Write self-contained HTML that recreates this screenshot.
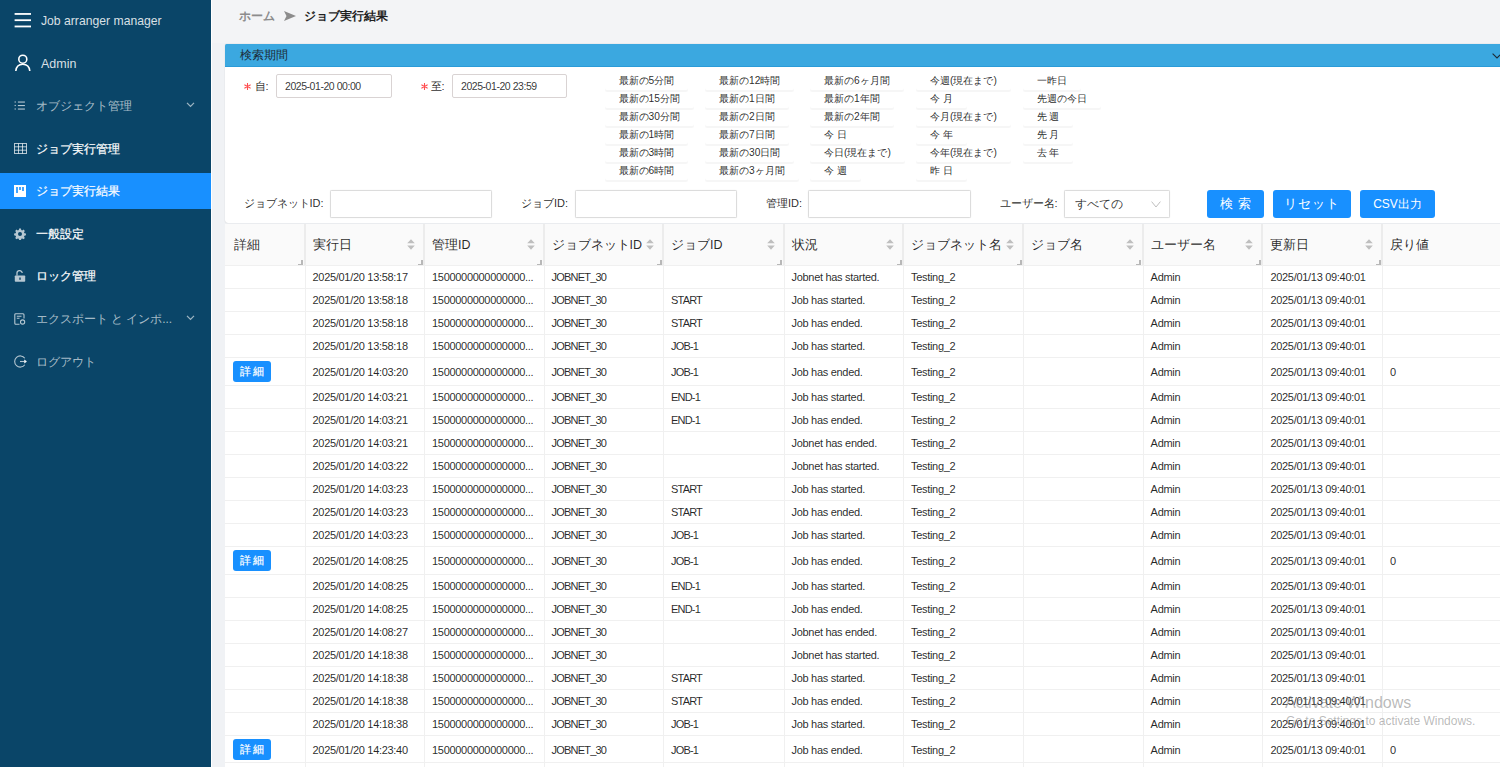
<!DOCTYPE html>
<html lang="ja"><head><meta charset="utf-8"><title>ジョブ実行結果</title>
<style>
*{box-sizing:border-box;margin:0;padding:0}
html,body{width:1500px;height:767px;overflow:hidden}
body{font-family:"Liberation Sans",sans-serif;background:#f0f2f5;position:relative;color:rgba(0,0,0,.85)}
.abs{position:absolute;white-space:nowrap}
#side{position:absolute;left:0;top:0;width:211px;height:767px;background:#0a4568}
#sideline{position:absolute;left:211px;top:0;width:1px;height:767px;background:#fff}
#topbar{position:absolute;left:212px;top:0;width:1288px;height:43px;background:#f3f4f6}
.mi{position:absolute;left:0;width:211px;height:36px;color:rgba(255,255,255,.65);font-size:12px;line-height:36px}
.mi .t{position:absolute;left:35.5px;top:0}
.mi.w{color:#fff;-webkit-text-stroke:0.2px #fff}
.mi.sel{background:#1890ff;color:#fff;-webkit-text-stroke:0.2px #fff}
.mi svg{position:absolute}
.chev{position:absolute;left:185.8px;top:14px}
#panel{position:absolute;left:225px;top:44px;width:1290px;height:179px;background:#fff;border-radius:1.5px 1.5px 3px 3px;box-shadow:0 0 1px rgba(0,0,0,.25)}
#phead{position:absolute;left:0;top:0;width:100%;height:23px;background:#3ba8e0;border-radius:1.5px 1.5px 0 0;border-bottom:1px solid #2a9bd8}
#phead .t{position:absolute;left:15px;top:0;line-height:22px;font-size:12px;color:#1d2b36}
.lbl{font-size:11px;color:rgba(0,0,0,.85);line-height:14px}
.req{color:#f5222d;font-family:"Liberation Mono",monospace}
.inp{position:absolute;background:#fff;border:1px solid #d9d3d3;border-radius:2px;font-size:10.5px;letter-spacing:-0.45px;color:rgba(0,0,0,.8);padding-left:8px}
.inp.f{border-color:#dcdcdc;border-radius:1.5px;box-shadow:0 0 1px rgba(0,0,0,.12)}
.ql{position:absolute;font-size:10.2px;height:18px;line-height:18px;padding:0 14px;color:rgba(0,0,0,.85);border-radius:2px;box-shadow:0 2px 0 rgba(0,0,0,.035)}
.qlb{position:absolute;height:1px;background:#f5f5f5}
.btn{position:absolute;background:#1890ff;color:#fff;border-radius:3px;font-size:12.5px;text-align:center}
#tbl{position:absolute;left:225px;top:224px;width:1275px;height:543px;background:#fff}
.th{position:absolute;font-size:12.5px;color:rgba(0,0,0,.85);line-height:16px}
.td{position:absolute;font-size:11px;letter-spacing:-0.3px;color:rgba(0,0,0,.85);line-height:14px}
.hl{position:absolute;height:1px;background:#f0f0f0}
.vl{position:absolute;width:1px;background:#f0f0f0}
.sort{position:absolute;width:8px;height:11px}
.rh{position:absolute;width:5px;height:5px;border-right:2px solid #b8b8b8;border-bottom:1.5px solid #b8b8b8}
.dbtn{position:absolute;left:233px;width:38px;height:21px;background:#1890ff;border-radius:3px;color:#fff;font-size:10.5px;line-height:21px;text-align:center;-webkit-text-stroke:0.2px #fff}
</style></head><body>

<div id="side">
<svg class="abs" style="left:14px;top:12px" width="18" height="16" viewBox="0 0 18 16"><rect x="0.6" y="1.05" width="16.4" height="1.8" fill="#fff"/><rect x="0.6" y="7.3" width="16.4" height="1.8" fill="#fff"/><rect x="0.6" y="13.56" width="16.4" height="1.8" fill="#fff"/></svg>
<div class="abs" style="left:41px;top:13px;font-size:12.2px;line-height:16px;color:rgba(255,255,255,.85)">Job arranger manager</div>
<svg class="abs" style="left:14px;top:54px" width="18" height="18" viewBox="0 0 18 18"><circle cx="8.8" cy="5.2" r="4" fill="none" stroke="#fff" stroke-width="1.6"/><path d="M1.8 17 C2.2 12.3 5 10.2 8.8 10.2 C12.6 10.2 15.4 12.3 15.8 17" fill="none" stroke="#fff" stroke-width="1.6"/></svg>
<div class="abs" style="left:41px;top:56px;font-size:12.5px;line-height:16px;color:rgba(255,255,255,.85)">Admin</div>
<div class="mi " style="top:87.5px">
<svg class="abs" style="left:14px;top:13.5px" width="12" height="10" viewBox="0 0 12 10"><g fill="rgba(255,255,255,.7)"><rect x="0.6" y="0.4" width="1.2" height="1.2"/><rect x="0.6" y="3.9" width="1.2" height="1.2"/><rect x="0.6" y="7.4" width="1.2" height="1.2"/><rect x="3.9" y="0.5" width="7" height="1.1"/><rect x="3.9" y="4" width="7" height="1.1"/><rect x="3.9" y="7.5" width="7" height="1.1"/></g></svg>
<span class="t">オブジェクト管理</span>
<svg class="chev" width="9" height="6" viewBox="0 0 9 6"><path d="M1 0.9 L4.5 4.4 L8 0.9" fill="none" stroke="rgba(255,255,255,.6)" stroke-width="1.3"/></svg>
</div>
<div class="mi w" style="top:130.5px">
<svg class="abs" style="left:13.5px;top:12.5px" width="13" height="11" viewBox="0 0 13 11"><g fill="none" stroke="rgba(255,255,255,.7)" stroke-width="1"><rect x="0.5" y="0.5" width="12" height="10"/><path d="M0.5 3.8H12.5M0.5 7.2H12.5M4.5 0.5V10.5M8.5 0.5V10.5"/></g></svg>
<span class="t">ジョブ実行管理</span>
</div>
<div class="mi sel" style="top:173px">
<svg class="abs" style="left:14px;top:12px" width="12" height="12" viewBox="0 0 12 12"><rect x="0" y="0" width="12" height="12" fill="#fff"/><rect x="2.2" y="2" width="1.6" height="6" fill="#1890ff"/><rect x="5.2" y="2" width="1.6" height="3" fill="#1890ff"/><rect x="8.2" y="2" width="1.6" height="4" fill="#1890ff"/></svg>
<span class="t">ジョブ実行結果</span>
</div>
<div class="mi w" style="top:215.5px">
<svg class="abs" style="left:14px;top:12.5px" width="12" height="12" viewBox="0 0 24 24"><path fill="rgba(255,255,255,.7)" d="M13.9 1l.6 3 2 .9 2.6-1.7 2.6 2.6-1.7 2.6.9 2 3 .6v3.7l-3 .6-.9 2 1.7 2.6-2.6 2.6-2.6-1.7-2 .9-.6 3h-3.7l-.6-3-2-.9-2.6 1.7-2.6-2.6 1.7-2.6-.9-2-3-.6v-3.7l3-.6.9-2-1.7-2.6 2.6-2.6 2.6 1.7 2-.9.6-3zM12 8a4 4 0 100 8 4 4 0 000-8z"/></svg>
<span class="t">一般設定</span>
</div>
<div class="mi w" style="top:258px">
<svg class="abs" style="left:14px;top:12px" width="12" height="12" viewBox="0 0 12 12"><path d="M3 5.5V3.5A2.6 2.6 0 0 1 8.2 3" fill="none" stroke="rgba(255,255,255,.7)" stroke-width="1.3"/><rect x="0.8" y="5.5" width="10.4" height="6.2" rx="0.8" fill="rgba(255,255,255,.7)"/><rect x="5.3" y="7.5" width="1.4" height="2.3" fill="#0b4468"/></svg>
<span class="t">ロック管理</span>
</div>
<div class="mi " style="top:301px">
<svg class="abs" style="left:14px;top:12px" width="12" height="12" viewBox="0 0 12 12"><g fill="none" stroke="rgba(255,255,255,.7)" stroke-width="1.1"><path d="M5.5 11.3H1.8A1 1 0 0 1 0.8 10.3V1.7A1 1 0 0 1 1.8 0.7H9A1 1 0 0 1 10 1.7V5.5"/><path d="M2.8 3.2H7.5M2.8 5.2H5.5"/><circle cx="8.6" cy="9" r="2.1"/></g></svg>
<span class="t">エクスポート と インポ...</span>
<svg class="chev" width="9" height="6" viewBox="0 0 9 6"><path d="M1 0.9 L4.5 4.4 L8 0.9" fill="none" stroke="rgba(255,255,255,.6)" stroke-width="1.3"/></svg>
</div>
<div class="mi " style="top:343.5px">
<svg class="abs" style="left:13.5px;top:11.5px" width="13" height="13" viewBox="0 0 13 13"><g fill="none" stroke="rgba(255,255,255,.7)" stroke-width="1.1"><path d="M10.8 3.2A5.6 5.6 0 1 0 10.8 9.8"/><path d="M6 6.5H12.2"/><path d="M10.3 4.8L12.2 6.5 10.3 8.2" fill="rgba(255,255,255,.7)"/></g></svg>
<span class="t">ログアウト</span>
</div>
</div><div id="sideline"></div>
<div id="topbar"></div>
<div class="abs" style="left:239px;top:9px;font-size:12.3px;line-height:15px;font-weight:bold;color:#8c8c8c">ホーム</div>
<svg class="abs" style="left:284px;top:11px" width="12" height="10" viewBox="0 0 12 10"><path d="M0 0 L12 5 L0 10 L2.5 5Z" fill="#8c8c8c"/></svg>
<div class="abs" style="left:303.5px;top:9px;font-size:12.3px;line-height:15px;font-weight:bold;color:#1f1f1f">ジョブ実行結果</div>
<div id="panel"><div id="phead"><span class="t">検索期間</span>
<svg class="abs" style="left:1267px;top:9px" width="10" height="6" viewBox="0 0 10 6"><path d="M0.6 0.6 L5 5 L9.4 0.6" fill="none" stroke="#1d2b36" stroke-width="1.1"/></svg>
</div></div>
<svg class="abs" style="left:243.5px;top:82.8px" width="7" height="7" viewBox="0 0 7 7"><g stroke="#ff4d4f" stroke-width="1.1" stroke-linecap="round"><path d="M3.5 0.4V6.6M0.8 1.95L6.2 5.05M0.8 5.05L6.2 1.95"/></g></svg>
<div class="abs lbl" style="left:254.5px;top:79px">自:</div>
<div class="inp" style="left:276px;top:74px;width:116px;height:24px;line-height:22px">2025-01-20 00:00</div>
<svg class="abs" style="left:420.5px;top:82.8px" width="7" height="7" viewBox="0 0 7 7"><g stroke="#ff4d4f" stroke-width="1.1" stroke-linecap="round"><path d="M3.5 0.4V6.6M0.8 1.95L6.2 5.05M0.8 5.05L6.2 1.95"/></g></svg>
<div class="abs lbl" style="left:430.5px;top:79px">至:</div>
<div class="inp" style="left:452px;top:74px;width:115px;height:24px;line-height:22px">2025-01-20 23:59</div>
<div class="ql" style="left:604.5px;top:72.0px">最新の5分間</div>
<div class="ql" style="left:604.5px;top:89.9px">最新の15分間</div>
<div class="ql" style="left:604.5px;top:107.8px">最新の30分間</div>
<div class="ql" style="left:604.5px;top:125.7px">最新の1時間</div>
<div class="ql" style="left:604.5px;top:143.6px">最新の3時間</div>
<div class="ql" style="left:604.5px;top:161.5px">最新の6時間</div>
<div class="ql" style="left:705px;top:72.0px">最新の12時間</div>
<div class="ql" style="left:705px;top:89.9px">最新の1日間</div>
<div class="ql" style="left:705px;top:107.8px">最新の2日間</div>
<div class="ql" style="left:705px;top:125.7px">最新の7日間</div>
<div class="ql" style="left:705px;top:143.6px">最新の30日間</div>
<div class="ql" style="left:705px;top:161.5px">最新の3ヶ月間</div>
<div class="ql" style="left:810px;top:72.0px">最新の6ヶ月間</div>
<div class="ql" style="left:810px;top:89.9px">最新の1年間</div>
<div class="ql" style="left:810px;top:107.8px">最新の2年間</div>
<div class="ql" style="left:810px;top:125.7px">今 日</div>
<div class="ql" style="left:810px;top:143.6px">今日(現在まで)</div>
<div class="ql" style="left:810px;top:161.5px">今 週</div>
<div class="ql" style="left:916px;top:72.0px">今週(現在まで)</div>
<div class="ql" style="left:916px;top:89.9px">今 月</div>
<div class="ql" style="left:916px;top:107.8px">今月(現在まで)</div>
<div class="ql" style="left:916px;top:125.7px">今 年</div>
<div class="ql" style="left:916px;top:143.6px">今年(現在まで)</div>
<div class="ql" style="left:916px;top:161.5px">昨 日</div>
<div class="ql" style="left:1022.5px;top:72.0px">一昨日</div>
<div class="ql" style="left:1022.5px;top:89.9px">先週の今日</div>
<div class="ql" style="left:1022.5px;top:107.8px">先 週</div>
<div class="ql" style="left:1022.5px;top:125.7px">先 月</div>
<div class="ql" style="left:1022.5px;top:143.6px">去 年</div>
<div class="abs lbl" style="left:243.5px;top:196px">ジョブネットID:</div>
<div class="inp f" style="left:330px;top:190px;width:162px;height:28px"></div>
<div class="abs lbl" style="left:521px;top:196px">ジョブID:</div>
<div class="inp f" style="left:575px;top:190px;width:162px;height:28px"></div>
<div class="abs lbl" style="left:766px;top:196px">管理ID:</div>
<div class="inp f" style="left:808px;top:190px;width:163px;height:28px"></div>
<div class="abs lbl" style="left:999.5px;top:196px">ユーザー名:</div>
<div class="inp f" style="left:1064px;top:190px;width:106px;height:28px;font-size:12.2px;letter-spacing:0;line-height:27px;padding-left:10px">すべての</div>
<svg class="abs" style="left:1150.5px;top:200.5px" width="10" height="7" viewBox="0 0 10 7"><path d="M0.6 0.6 L5 6 L9.4 0.6" fill="none" stroke="#bfbfbf" stroke-width="1"/></svg>
<div class="btn" style="left:1207px;top:190px;width:57px;height:28px;line-height:28px;letter-spacing:1px;padding-left:1px">検 索</div>
<div class="btn" style="left:1273px;top:190px;width:78px;height:28px;line-height:28px;letter-spacing:1px">リセット</div>
<div class="btn" style="left:1360px;top:190px;width:75px;height:28px;line-height:28px;font-size:12px">CSV出力</div>
<div id="tbl"></div>
<div class="abs" style="left:225px;top:224px;width:1275px;height:41px;background:#fafafa"></div>
<div class="hl" style="left:225px;top:265px;width:1275px"></div>
<div class="th" style="left:233.5px;top:237px">詳細</div>
<div class="abs" style="left:303.5px;top:224px;width:2px;height:41px;background:#ececec"></div>
<div class="rh" style="left:298.0px;top:259.7px"></div>
<div class="th" style="left:312.5px;top:237px">実行日</div>
<div class="abs" style="left:423.0px;top:224px;width:2px;height:41px;background:#ececec"></div>
<div class="rh" style="left:417.5px;top:259.7px"></div>
<svg class="sort" style="left:407.0px;top:239px" viewBox="0 0 8 11"><path d="M4 0.3L7.8 4.3H0.2Z M4 10.7L7.8 6.6H0.2Z" fill="#bfbfbf"/></svg>
<div class="th" style="left:432.0px;top:237px">管理ID</div>
<div class="abs" style="left:542.6px;top:224px;width:2px;height:41px;background:#ececec"></div>
<div class="rh" style="left:537.1px;top:259.7px"></div>
<svg class="sort" style="left:526.6px;top:239px" viewBox="0 0 8 11"><path d="M4 0.3L7.8 4.3H0.2Z M4 10.7L7.8 6.6H0.2Z" fill="#bfbfbf"/></svg>
<div class="th" style="left:551.6px;top:237px">ジョブネットID</div>
<div class="abs" style="left:662.0px;top:224px;width:2px;height:41px;background:#ececec"></div>
<div class="rh" style="left:656.5px;top:259.7px"></div>
<svg class="sort" style="left:646.0px;top:239px" viewBox="0 0 8 11"><path d="M4 0.3L7.8 4.3H0.2Z M4 10.7L7.8 6.6H0.2Z" fill="#bfbfbf"/></svg>
<div class="th" style="left:671.0px;top:237px">ジョブID</div>
<div class="abs" style="left:782.5px;top:224px;width:2px;height:41px;background:#ececec"></div>
<div class="rh" style="left:777.0px;top:259.7px"></div>
<svg class="sort" style="left:766.5px;top:239px" viewBox="0 0 8 11"><path d="M4 0.3L7.8 4.3H0.2Z M4 10.7L7.8 6.6H0.2Z" fill="#bfbfbf"/></svg>
<div class="th" style="left:791.5px;top:237px">状況</div>
<div class="abs" style="left:902.0px;top:224px;width:2px;height:41px;background:#ececec"></div>
<div class="rh" style="left:896.5px;top:259.7px"></div>
<svg class="sort" style="left:886.0px;top:239px" viewBox="0 0 8 11"><path d="M4 0.3L7.8 4.3H0.2Z M4 10.7L7.8 6.6H0.2Z" fill="#bfbfbf"/></svg>
<div class="th" style="left:911.0px;top:237px">ジョブネット名</div>
<div class="abs" style="left:1022.0px;top:224px;width:2px;height:41px;background:#ececec"></div>
<div class="rh" style="left:1016.5px;top:259.7px"></div>
<svg class="sort" style="left:1006.0px;top:239px" viewBox="0 0 8 11"><path d="M4 0.3L7.8 4.3H0.2Z M4 10.7L7.8 6.6H0.2Z" fill="#bfbfbf"/></svg>
<div class="th" style="left:1031.0px;top:237px">ジョブ名</div>
<div class="abs" style="left:1141.6px;top:224px;width:2px;height:41px;background:#ececec"></div>
<div class="rh" style="left:1136.1px;top:259.7px"></div>
<svg class="sort" style="left:1125.6px;top:239px" viewBox="0 0 8 11"><path d="M4 0.3L7.8 4.3H0.2Z M4 10.7L7.8 6.6H0.2Z" fill="#bfbfbf"/></svg>
<div class="th" style="left:1150.6px;top:237px">ユーザー名</div>
<div class="abs" style="left:1261.4px;top:224px;width:2px;height:41px;background:#ececec"></div>
<div class="rh" style="left:1255.9px;top:259.7px"></div>
<svg class="sort" style="left:1245.4px;top:239px" viewBox="0 0 8 11"><path d="M4 0.3L7.8 4.3H0.2Z M4 10.7L7.8 6.6H0.2Z" fill="#bfbfbf"/></svg>
<div class="th" style="left:1270.4px;top:237px">更新日</div>
<div class="abs" style="left:1381.0px;top:224px;width:2px;height:41px;background:#ececec"></div>
<div class="rh" style="left:1375.5px;top:259.7px"></div>
<svg class="sort" style="left:1365.0px;top:239px" viewBox="0 0 8 11"><path d="M4 0.3L7.8 4.3H0.2Z M4 10.7L7.8 6.6H0.2Z" fill="#bfbfbf"/></svg>
<div class="th" style="left:1390.0px;top:237px">戻り値</div>
<div class="td" style="left:312.5px;top:270.1px">2025/01/20 13:58:17</div>
<div class="td" style="left:432.0px;top:270.1px">1500000000000000...</div>
<div class="td" style="left:551.6px;top:270.1px;letter-spacing:-0.8px">JOBNET_30</div>
<div class="td" style="left:791.5px;top:270.1px">Jobnet has started.</div>
<div class="td" style="left:911.0px;top:270.1px">Testing_2</div>
<div class="td" style="left:1150.6px;top:270.1px">Admin</div>
<div class="td" style="left:1270.4px;top:270.1px">2025/01/13 09:40:01</div>
<div class="hl" style="left:225px;top:288.1px;width:1275px"></div>
<div class="td" style="left:312.5px;top:293.2px">2025/01/20 13:58:18</div>
<div class="td" style="left:432.0px;top:293.2px">1500000000000000...</div>
<div class="td" style="left:551.6px;top:293.2px;letter-spacing:-0.8px">JOBNET_30</div>
<div class="td" style="left:671.0px;top:293.2px;letter-spacing:-0.8px">START</div>
<div class="td" style="left:791.5px;top:293.2px">Job has started.</div>
<div class="td" style="left:911.0px;top:293.2px">Testing_2</div>
<div class="td" style="left:1150.6px;top:293.2px">Admin</div>
<div class="td" style="left:1270.4px;top:293.2px">2025/01/13 09:40:01</div>
<div class="hl" style="left:225px;top:311.2px;width:1275px"></div>
<div class="td" style="left:312.5px;top:316.3px">2025/01/20 13:58:18</div>
<div class="td" style="left:432.0px;top:316.3px">1500000000000000...</div>
<div class="td" style="left:551.6px;top:316.3px;letter-spacing:-0.8px">JOBNET_30</div>
<div class="td" style="left:671.0px;top:316.3px;letter-spacing:-0.8px">START</div>
<div class="td" style="left:791.5px;top:316.3px">Job has ended.</div>
<div class="td" style="left:911.0px;top:316.3px">Testing_2</div>
<div class="td" style="left:1150.6px;top:316.3px">Admin</div>
<div class="td" style="left:1270.4px;top:316.3px">2025/01/13 09:40:01</div>
<div class="hl" style="left:225px;top:334.3px;width:1275px"></div>
<div class="td" style="left:312.5px;top:339.4px">2025/01/20 13:58:18</div>
<div class="td" style="left:432.0px;top:339.4px">1500000000000000...</div>
<div class="td" style="left:551.6px;top:339.4px;letter-spacing:-0.8px">JOBNET_30</div>
<div class="td" style="left:671.0px;top:339.4px;letter-spacing:-0.8px">JOB-1</div>
<div class="td" style="left:791.5px;top:339.4px">Job has started.</div>
<div class="td" style="left:911.0px;top:339.4px">Testing_2</div>
<div class="td" style="left:1150.6px;top:339.4px">Admin</div>
<div class="td" style="left:1270.4px;top:339.4px">2025/01/13 09:40:01</div>
<div class="hl" style="left:225px;top:357.4px;width:1275px"></div>
<div class="dbtn" style="top:361.0px">詳 細</div>
<div class="td" style="left:312.5px;top:365.2px">2025/01/20 14:03:20</div>
<div class="td" style="left:432.0px;top:365.2px">1500000000000000...</div>
<div class="td" style="left:551.6px;top:365.2px;letter-spacing:-0.8px">JOBNET_30</div>
<div class="td" style="left:671.0px;top:365.2px;letter-spacing:-0.8px">JOB-1</div>
<div class="td" style="left:791.5px;top:365.2px">Job has ended.</div>
<div class="td" style="left:911.0px;top:365.2px">Testing_2</div>
<div class="td" style="left:1150.6px;top:365.2px">Admin</div>
<div class="td" style="left:1270.4px;top:365.2px">2025/01/13 09:40:01</div>
<div class="td" style="left:1390.0px;top:365.2px">0</div>
<div class="hl" style="left:225px;top:384.6px;width:1275px"></div>
<div class="td" style="left:312.5px;top:389.7px">2025/01/20 14:03:21</div>
<div class="td" style="left:432.0px;top:389.7px">1500000000000000...</div>
<div class="td" style="left:551.6px;top:389.7px;letter-spacing:-0.8px">JOBNET_30</div>
<div class="td" style="left:671.0px;top:389.7px;letter-spacing:-0.8px">END-1</div>
<div class="td" style="left:791.5px;top:389.7px">Job has started.</div>
<div class="td" style="left:911.0px;top:389.7px">Testing_2</div>
<div class="td" style="left:1150.6px;top:389.7px">Admin</div>
<div class="td" style="left:1270.4px;top:389.7px">2025/01/13 09:40:01</div>
<div class="hl" style="left:225px;top:407.7px;width:1275px"></div>
<div class="td" style="left:312.5px;top:412.8px">2025/01/20 14:03:21</div>
<div class="td" style="left:432.0px;top:412.8px">1500000000000000...</div>
<div class="td" style="left:551.6px;top:412.8px;letter-spacing:-0.8px">JOBNET_30</div>
<div class="td" style="left:671.0px;top:412.8px;letter-spacing:-0.8px">END-1</div>
<div class="td" style="left:791.5px;top:412.8px">Job has ended.</div>
<div class="td" style="left:911.0px;top:412.8px">Testing_2</div>
<div class="td" style="left:1150.6px;top:412.8px">Admin</div>
<div class="td" style="left:1270.4px;top:412.8px">2025/01/13 09:40:01</div>
<div class="hl" style="left:225px;top:430.8px;width:1275px"></div>
<div class="td" style="left:312.5px;top:435.9px">2025/01/20 14:03:21</div>
<div class="td" style="left:432.0px;top:435.9px">1500000000000000...</div>
<div class="td" style="left:551.6px;top:435.9px;letter-spacing:-0.8px">JOBNET_30</div>
<div class="td" style="left:791.5px;top:435.9px">Jobnet has ended.</div>
<div class="td" style="left:911.0px;top:435.9px">Testing_2</div>
<div class="td" style="left:1150.6px;top:435.9px">Admin</div>
<div class="td" style="left:1270.4px;top:435.9px">2025/01/13 09:40:01</div>
<div class="hl" style="left:225px;top:453.9px;width:1275px"></div>
<div class="td" style="left:312.5px;top:459.0px">2025/01/20 14:03:22</div>
<div class="td" style="left:432.0px;top:459.0px">1500000000000000...</div>
<div class="td" style="left:551.6px;top:459.0px;letter-spacing:-0.8px">JOBNET_30</div>
<div class="td" style="left:791.5px;top:459.0px">Jobnet has started.</div>
<div class="td" style="left:911.0px;top:459.0px">Testing_2</div>
<div class="td" style="left:1150.6px;top:459.0px">Admin</div>
<div class="td" style="left:1270.4px;top:459.0px">2025/01/13 09:40:01</div>
<div class="hl" style="left:225px;top:477.0px;width:1275px"></div>
<div class="td" style="left:312.5px;top:482.1px">2025/01/20 14:03:23</div>
<div class="td" style="left:432.0px;top:482.1px">1500000000000000...</div>
<div class="td" style="left:551.6px;top:482.1px;letter-spacing:-0.8px">JOBNET_30</div>
<div class="td" style="left:671.0px;top:482.1px;letter-spacing:-0.8px">START</div>
<div class="td" style="left:791.5px;top:482.1px">Job has started.</div>
<div class="td" style="left:911.0px;top:482.1px">Testing_2</div>
<div class="td" style="left:1150.6px;top:482.1px">Admin</div>
<div class="td" style="left:1270.4px;top:482.1px">2025/01/13 09:40:01</div>
<div class="hl" style="left:225px;top:500.1px;width:1275px"></div>
<div class="td" style="left:312.5px;top:505.2px">2025/01/20 14:03:23</div>
<div class="td" style="left:432.0px;top:505.2px">1500000000000000...</div>
<div class="td" style="left:551.6px;top:505.2px;letter-spacing:-0.8px">JOBNET_30</div>
<div class="td" style="left:671.0px;top:505.2px;letter-spacing:-0.8px">START</div>
<div class="td" style="left:791.5px;top:505.2px">Job has ended.</div>
<div class="td" style="left:911.0px;top:505.2px">Testing_2</div>
<div class="td" style="left:1150.6px;top:505.2px">Admin</div>
<div class="td" style="left:1270.4px;top:505.2px">2025/01/13 09:40:01</div>
<div class="hl" style="left:225px;top:523.2px;width:1275px"></div>
<div class="td" style="left:312.5px;top:528.3px">2025/01/20 14:03:23</div>
<div class="td" style="left:432.0px;top:528.3px">1500000000000000...</div>
<div class="td" style="left:551.6px;top:528.3px;letter-spacing:-0.8px">JOBNET_30</div>
<div class="td" style="left:671.0px;top:528.3px;letter-spacing:-0.8px">JOB-1</div>
<div class="td" style="left:791.5px;top:528.3px">Job has started.</div>
<div class="td" style="left:911.0px;top:528.3px">Testing_2</div>
<div class="td" style="left:1150.6px;top:528.3px">Admin</div>
<div class="td" style="left:1270.4px;top:528.3px">2025/01/13 09:40:01</div>
<div class="hl" style="left:225px;top:546.3px;width:1275px"></div>
<div class="dbtn" style="top:549.9px">詳 細</div>
<div class="td" style="left:312.5px;top:554.1px">2025/01/20 14:08:25</div>
<div class="td" style="left:432.0px;top:554.1px">1500000000000000...</div>
<div class="td" style="left:551.6px;top:554.1px;letter-spacing:-0.8px">JOBNET_30</div>
<div class="td" style="left:671.0px;top:554.1px;letter-spacing:-0.8px">JOB-1</div>
<div class="td" style="left:791.5px;top:554.1px">Job has ended.</div>
<div class="td" style="left:911.0px;top:554.1px">Testing_2</div>
<div class="td" style="left:1150.6px;top:554.1px">Admin</div>
<div class="td" style="left:1270.4px;top:554.1px">2025/01/13 09:40:01</div>
<div class="td" style="left:1390.0px;top:554.1px">0</div>
<div class="hl" style="left:225px;top:573.5px;width:1275px"></div>
<div class="td" style="left:312.5px;top:578.6px">2025/01/20 14:08:25</div>
<div class="td" style="left:432.0px;top:578.6px">1500000000000000...</div>
<div class="td" style="left:551.6px;top:578.6px;letter-spacing:-0.8px">JOBNET_30</div>
<div class="td" style="left:671.0px;top:578.6px;letter-spacing:-0.8px">END-1</div>
<div class="td" style="left:791.5px;top:578.6px">Job has started.</div>
<div class="td" style="left:911.0px;top:578.6px">Testing_2</div>
<div class="td" style="left:1150.6px;top:578.6px">Admin</div>
<div class="td" style="left:1270.4px;top:578.6px">2025/01/13 09:40:01</div>
<div class="hl" style="left:225px;top:596.6px;width:1275px"></div>
<div class="td" style="left:312.5px;top:601.7px">2025/01/20 14:08:25</div>
<div class="td" style="left:432.0px;top:601.7px">1500000000000000...</div>
<div class="td" style="left:551.6px;top:601.7px;letter-spacing:-0.8px">JOBNET_30</div>
<div class="td" style="left:671.0px;top:601.7px;letter-spacing:-0.8px">END-1</div>
<div class="td" style="left:791.5px;top:601.7px">Job has ended.</div>
<div class="td" style="left:911.0px;top:601.7px">Testing_2</div>
<div class="td" style="left:1150.6px;top:601.7px">Admin</div>
<div class="td" style="left:1270.4px;top:601.7px">2025/01/13 09:40:01</div>
<div class="hl" style="left:225px;top:619.7px;width:1275px"></div>
<div class="td" style="left:312.5px;top:624.8px">2025/01/20 14:08:27</div>
<div class="td" style="left:432.0px;top:624.8px">1500000000000000...</div>
<div class="td" style="left:551.6px;top:624.8px;letter-spacing:-0.8px">JOBNET_30</div>
<div class="td" style="left:791.5px;top:624.8px">Jobnet has ended.</div>
<div class="td" style="left:911.0px;top:624.8px">Testing_2</div>
<div class="td" style="left:1150.6px;top:624.8px">Admin</div>
<div class="td" style="left:1270.4px;top:624.8px">2025/01/13 09:40:01</div>
<div class="hl" style="left:225px;top:642.8px;width:1275px"></div>
<div class="td" style="left:312.5px;top:647.9px">2025/01/20 14:18:38</div>
<div class="td" style="left:432.0px;top:647.9px">1500000000000000...</div>
<div class="td" style="left:551.6px;top:647.9px;letter-spacing:-0.8px">JOBNET_30</div>
<div class="td" style="left:791.5px;top:647.9px">Jobnet has started.</div>
<div class="td" style="left:911.0px;top:647.9px">Testing_2</div>
<div class="td" style="left:1150.6px;top:647.9px">Admin</div>
<div class="td" style="left:1270.4px;top:647.9px">2025/01/13 09:40:01</div>
<div class="hl" style="left:225px;top:665.9px;width:1275px"></div>
<div class="td" style="left:312.5px;top:671.0px">2025/01/20 14:18:38</div>
<div class="td" style="left:432.0px;top:671.0px">1500000000000000...</div>
<div class="td" style="left:551.6px;top:671.0px;letter-spacing:-0.8px">JOBNET_30</div>
<div class="td" style="left:671.0px;top:671.0px;letter-spacing:-0.8px">START</div>
<div class="td" style="left:791.5px;top:671.0px">Job has started.</div>
<div class="td" style="left:911.0px;top:671.0px">Testing_2</div>
<div class="td" style="left:1150.6px;top:671.0px">Admin</div>
<div class="td" style="left:1270.4px;top:671.0px">2025/01/13 09:40:01</div>
<div class="hl" style="left:225px;top:689.0px;width:1275px"></div>
<div class="td" style="left:312.5px;top:694.1px">2025/01/20 14:18:38</div>
<div class="td" style="left:432.0px;top:694.1px">1500000000000000...</div>
<div class="td" style="left:551.6px;top:694.1px;letter-spacing:-0.8px">JOBNET_30</div>
<div class="td" style="left:671.0px;top:694.1px;letter-spacing:-0.8px">START</div>
<div class="td" style="left:791.5px;top:694.1px">Job has ended.</div>
<div class="td" style="left:911.0px;top:694.1px">Testing_2</div>
<div class="td" style="left:1150.6px;top:694.1px">Admin</div>
<div class="td" style="left:1270.4px;top:694.1px">2025/01/13 09:40:01</div>
<div class="hl" style="left:225px;top:712.1px;width:1275px"></div>
<div class="td" style="left:312.5px;top:717.2px">2025/01/20 14:18:38</div>
<div class="td" style="left:432.0px;top:717.2px">1500000000000000...</div>
<div class="td" style="left:551.6px;top:717.2px;letter-spacing:-0.8px">JOBNET_30</div>
<div class="td" style="left:671.0px;top:717.2px;letter-spacing:-0.8px">JOB-1</div>
<div class="td" style="left:791.5px;top:717.2px">Job has started.</div>
<div class="td" style="left:911.0px;top:717.2px">Testing_2</div>
<div class="td" style="left:1150.6px;top:717.2px">Admin</div>
<div class="td" style="left:1270.4px;top:717.2px">2025/01/13 09:40:01</div>
<div class="hl" style="left:225px;top:735.2px;width:1275px"></div>
<div class="dbtn" style="top:738.8px">詳 細</div>
<div class="td" style="left:312.5px;top:743.0px">2025/01/20 14:23:40</div>
<div class="td" style="left:432.0px;top:743.0px">1500000000000000...</div>
<div class="td" style="left:551.6px;top:743.0px;letter-spacing:-0.8px">JOBNET_30</div>
<div class="td" style="left:671.0px;top:743.0px;letter-spacing:-0.8px">JOB-1</div>
<div class="td" style="left:791.5px;top:743.0px">Job has ended.</div>
<div class="td" style="left:911.0px;top:743.0px">Testing_2</div>
<div class="td" style="left:1150.6px;top:743.0px">Admin</div>
<div class="td" style="left:1270.4px;top:743.0px">2025/01/13 09:40:01</div>
<div class="td" style="left:1390.0px;top:743.0px">0</div>
<div class="hl" style="left:225px;top:762.4px;width:1275px"></div>
<div class="td" style="left:312.5px;top:767.5px">2025/01/20 14:23:41</div>
<div class="td" style="left:432.0px;top:767.5px">1500000000000000...</div>
<div class="td" style="left:551.6px;top:767.5px;letter-spacing:-0.8px">JOBNET_30</div>
<div class="td" style="left:671.0px;top:767.5px;letter-spacing:-0.8px">END-1</div>
<div class="td" style="left:791.5px;top:767.5px">Job has started.</div>
<div class="td" style="left:911.0px;top:767.5px">Testing_2</div>
<div class="td" style="left:1150.6px;top:767.5px">Admin</div>
<div class="td" style="left:1270.4px;top:767.5px">2025/01/13 09:40:01</div>
<div class="hl" style="left:225px;top:785.5px;width:1275px"></div>
<div class="vl" style="left:304.5px;top:266px;height:502px"></div>
<div class="vl" style="left:424.0px;top:266px;height:502px"></div>
<div class="vl" style="left:543.6px;top:266px;height:502px"></div>
<div class="vl" style="left:663.0px;top:266px;height:502px"></div>
<div class="vl" style="left:783.5px;top:266px;height:502px"></div>
<div class="vl" style="left:903.0px;top:266px;height:502px"></div>
<div class="vl" style="left:1023.0px;top:266px;height:502px"></div>
<div class="vl" style="left:1142.6px;top:266px;height:502px"></div>
<div class="vl" style="left:1262.4px;top:266px;height:502px"></div>
<div class="vl" style="left:1382.0px;top:266px;height:502px"></div>
<div class="abs" style="left:1285px;top:693.5px;font-size:16px;color:rgba(100,100,100,.45)">Activate Windows</div>
<div class="abs" style="left:1286px;top:714px;font-size:12px;color:rgba(100,100,100,.45)">Go to Settings to activate Windows.</div>
</body></html>
